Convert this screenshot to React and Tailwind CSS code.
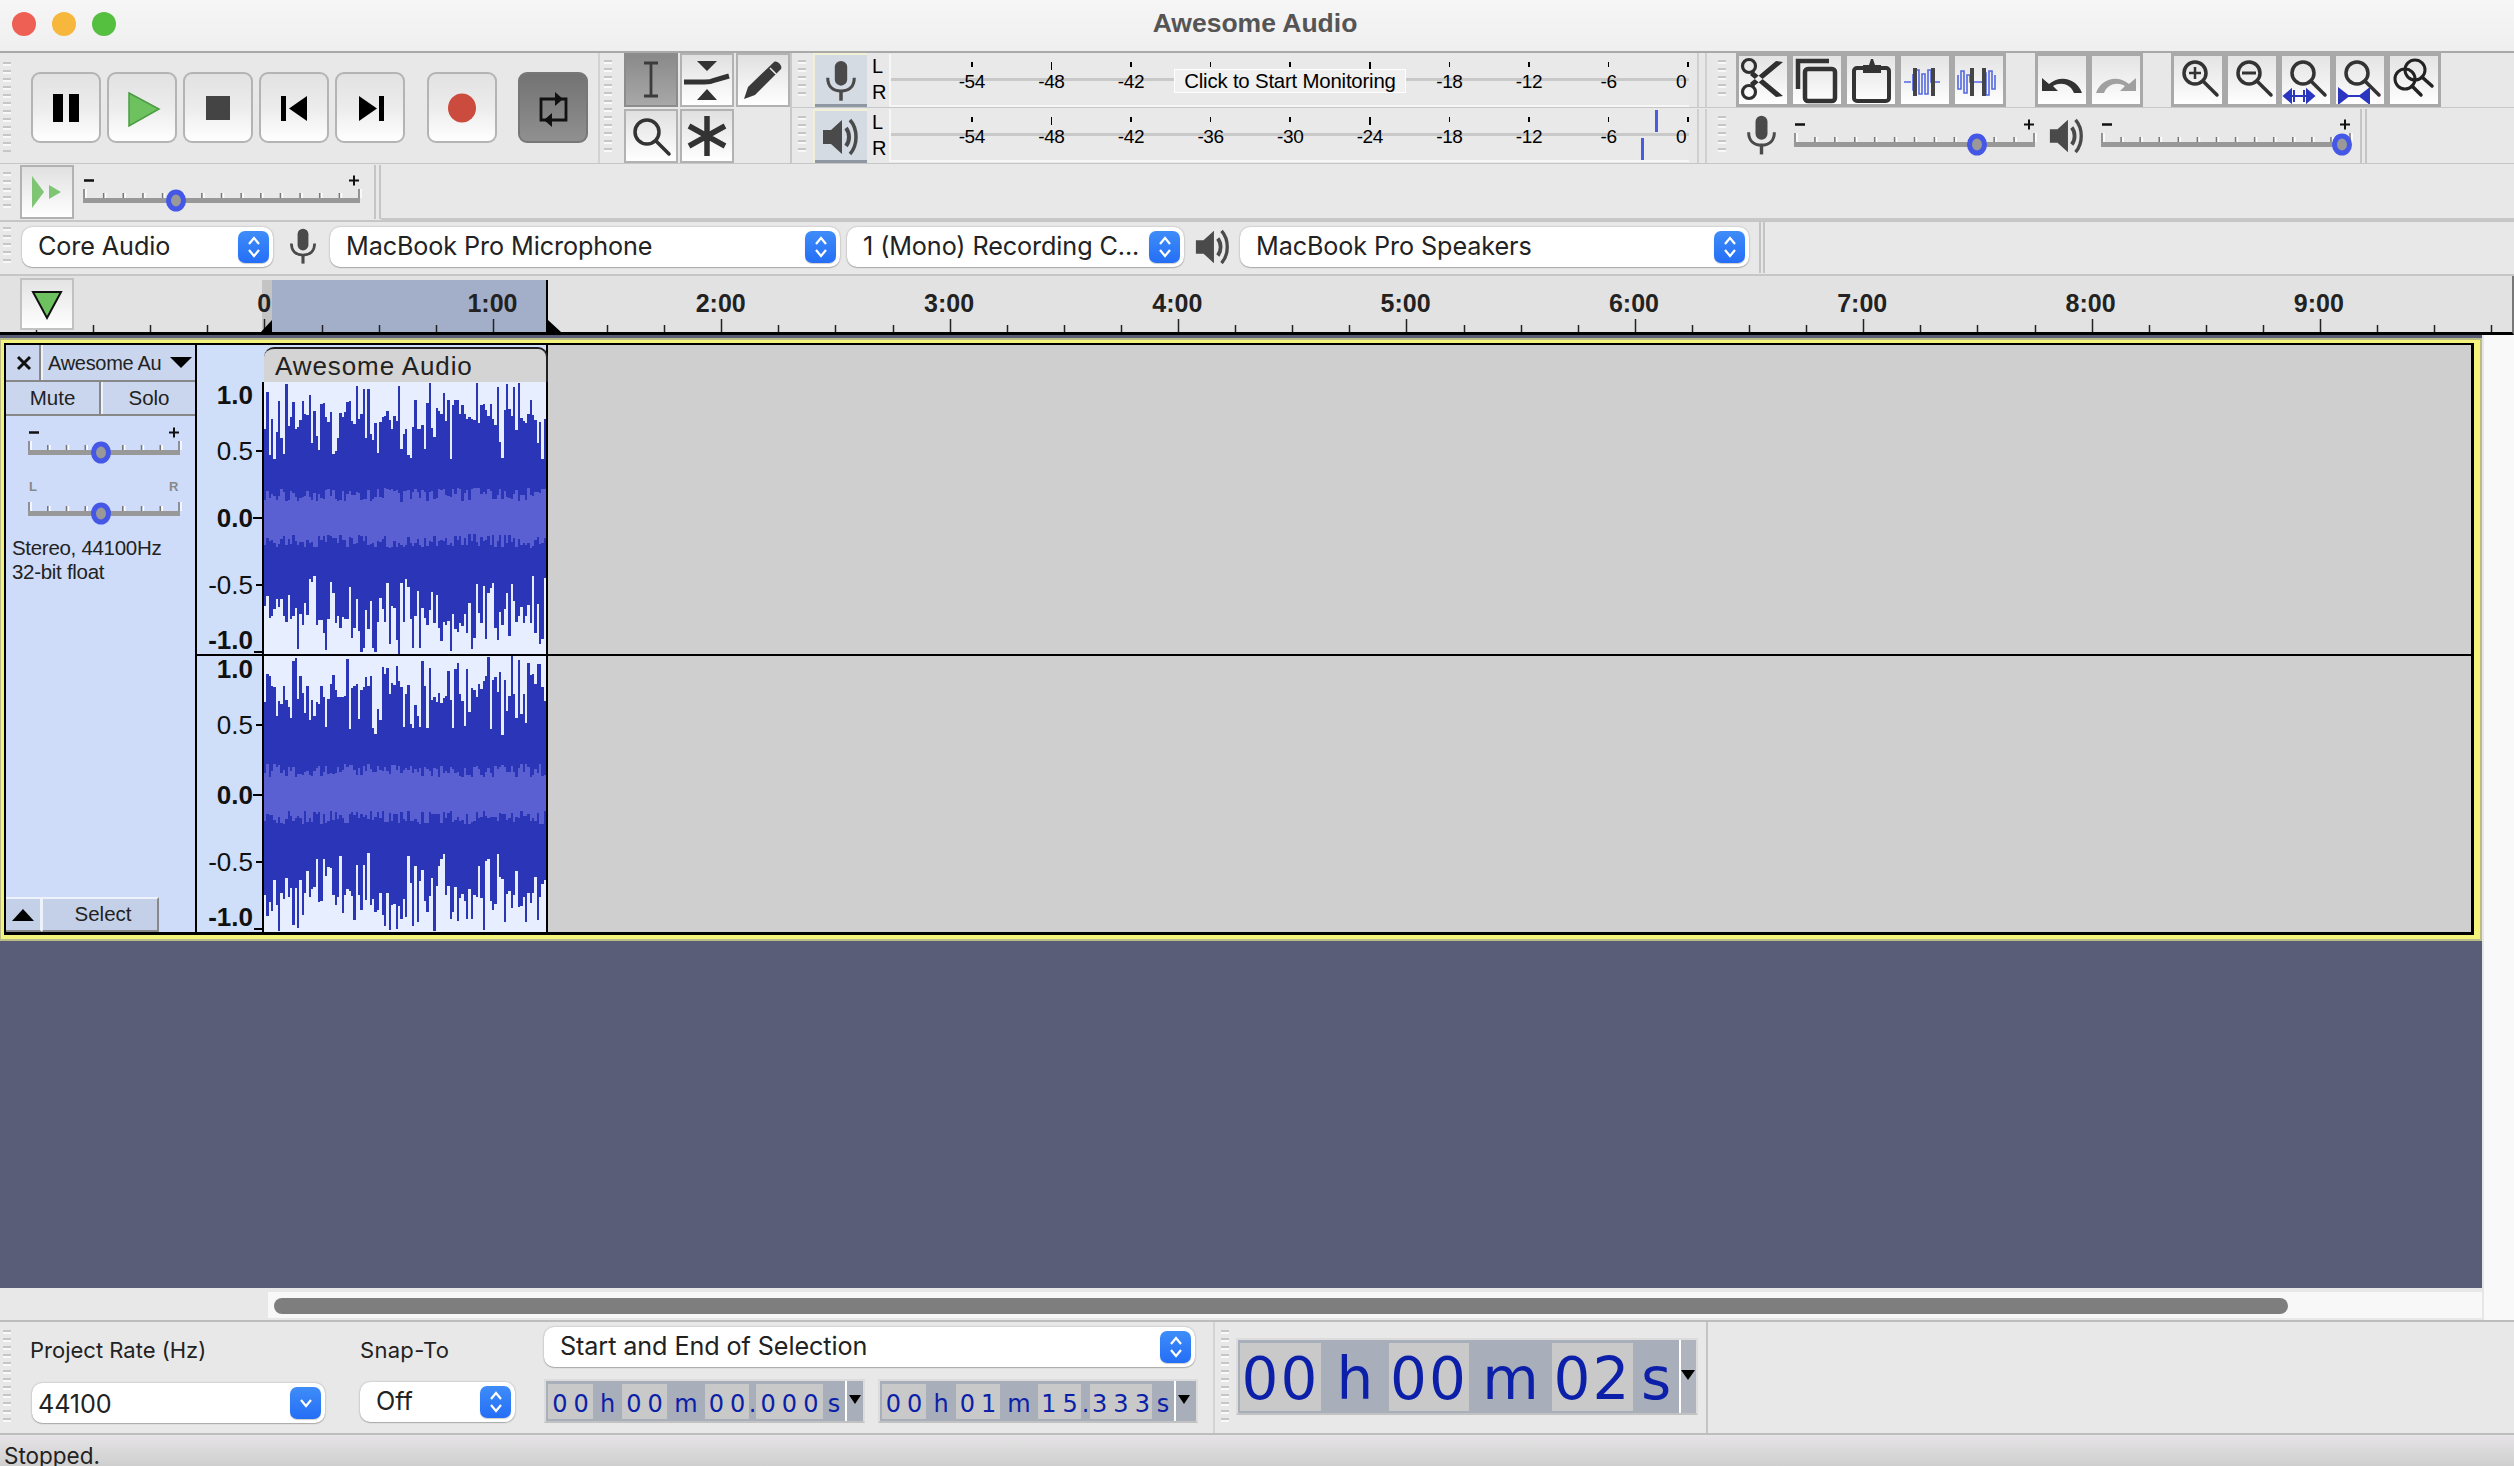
const SANS = 'font-["Liberation_Sans",Arial,sans-serif]';

// seeded random so the waveform stays the same on every render
const makeRandom = (seed) => () => {
    seed = (seed + 0x6d2b79f5) | 0;
    let t = Math.imul(seed ^ (seed >>> 15), 1 | seed);
    t = (t + Math.imul(t ^ (t >>> 7), 61 | t)) ^ t;
    return ((t ^ (t >>> 14)) >>> 0) / 4294967296;
};

const wavePaths = (seed, height) => {
    const rand = makeRandom(seed);
    const mid = Math.round(height / 2);
    const half = height / 2;
    const spike = (i) => {
        const swell = Math.sin(i / 9 + seed) * 0.04;
        const r = rand();
        if (r < 0.26) return 0.42 + rand() * 0.22;
        if (r < 0.5) return 0.84 + rand() * 0.16;
        return 0.66 + rand() * 0.16 + swell;
    };
    let dark = '';
    let light = '';
    for (let i = 0; i < 121; i++) {
        const x = Math.round(i * 2.35);
        const w = Math.round((i + 1) * 2.35) - x;
        const up = Math.round(spike(i) * half);
        const down = Math.round(spike(i) * half);
        dark += `M${x} ${mid - up}h${w}V${mid + down}h-${w}Z`;
        const rmsUp = Math.round((0.12 + rand() * 0.1) * half);
        const rmsDown = Math.round((0.12 + rand() * 0.1) * half);
        light += `M${x} ${mid - rmsUp}h${w}V${mid + rmsDown}h-${w}Z`;
    }
    return { dark, light };
};

const Grip = ({ className = '' }) => (
    <div className={`w-[8px] shrink-0 bg-[repeating-linear-gradient(to_bottom,#c6c6c6_0,#c6c6c6_2px,#f8f8f8_2px,#f8f8f8_4px,transparent_4px,transparent_8px)] ${className}`} />
);

const TransportButton = ({ children, active, className = '' }) => (
    <div className={`w-[70px] h-[71px] shrink-0 rounded-[9px] border-2 flex items-center justify-center ${active ? 'border-[#777] bg-gradient-to-b from-[#737373] to-[#909090]' : 'border-[#b4b4b4] bg-gradient-to-b from-[#e2e2e2] via-[#ececec] to-white'} ${className}`}>
        <svg width="66" height="67" viewBox="0 0 66 67">{children}</svg>
    </div>
);

const ToolButton = ({ children, active }) => (
    <div className={`w-[54px] h-[54px] shrink-0 border-2 flex items-center justify-center ${active ? 'border-[#8c8c8c] bg-gradient-to-b from-[#8a8a8a] to-[#a8a8a8]' : 'border-[#b2b2b2] bg-gradient-to-b from-[#e0e0e0] via-[#f0f0f0] to-white'}`}>
        <svg width="50" height="50" viewBox="2 2 50 50">{children}</svg>
    </div>
);

const EditButton = ({ children }) => (
    <div className="w-[54px] h-[54px] shrink-0 border-[3px] border-[#a9a9a9] bg-gradient-to-b from-[#e4e4e4] via-[#f0f0f0] to-white flex items-center justify-center">
        <svg width="48" height="48" viewBox="3 3 48 48">{children}</svg>
    </div>
);

const MicIcon = ({ size = 36, color = '#4a4a4a' }) => (
    <svg width={size} height={size * 1.3} viewBox="0 0 36 47" fill="none">
        <rect x="11" y="1" width="14" height="28" rx="7" fill={color} />
        <path d="M3 20c0 10 6 15 15 15s15-5 15-15" stroke={color} strokeWidth="3.5" />
        <path d="M18 35v11" stroke={color} strokeWidth="4" />
    </svg>
);

const SpeakerIcon = ({ size = 40, color = '#4a4a4a' }) => (
    <svg width={size} height={size} viewBox="0 0 40 40" fill="none">
        <path d="M2 13h8L21 3v34L10 27H2z" fill={color} />
        <path d="M25 11c4 5 4 13 0 18" stroke={color} strokeWidth="4" />
        <path d="M29 3c8 9 8 25 0 34" stroke={color} strokeWidth="3.5" />
    </svg>
);

const Slider = ({ width, count, thumb, pan }) => {
    const ticks = Array.from({ length: count }, (_, i) => 1 + (i * (width - 2)) / (count - 1));
    return (
        <svg width={width} height="56" viewBox={`0 0 ${width} 56`} className="shrink-0 overflow-visible">
            {ticks.map((x, i) => (
                <g key={i}>
                    <path d={`M${x} ${i === 0 || i === count - 1 ? 25 : 29}V34`} stroke="#777" strokeWidth="1.5" />
                    <path d={`M${x + 2} ${i === 0 || i === count - 1 ? 25 : 29}V34`} stroke="#fff" strokeWidth="1.5" />
                </g>
            ))}
            <rect x="0" y="34" width={width} height="5" fill="#989898" />
            {pan ? (
                <>
                    <text x="1" y="14" fontSize="13" fontWeight="700" fill="#888" fontFamily="Liberation Sans">L</text>
                    <text x={width - 11} y="14" fontSize="13" fontWeight="700" fill="#888" fontFamily="Liberation Sans">R</text>
                </>
            ) : (
                <>
                    <path d="M1 16.5h10" stroke="#111" strokeWidth="2.5" />
                    <path d={`M${width - 11} 16.5h10M${width - 6} 11.5v10`} stroke="#111" strokeWidth="2" />
                </>
            )}
            <ellipse cx={thumb} cy="36.5" rx="7.5" ry="8.5" fill="#999" stroke="#4557e6" strokeWidth="5" />
        </svg>
    );
};

const Stepper = ({ single }) => (
    <div className="w-[31px] h-[32px] shrink-0 rounded-[7px] bg-gradient-to-b from-[#3f8cf9] to-[#246ef6] flex items-center justify-center shadow-[0_1px_1px_rgba(0,0,0,0.2)]">
        <svg width="16" height="26" viewBox="0 0 16 26" fill="none" stroke="#fff" strokeWidth="2.2">
            {!single && <path d="M3 10l5-6 5 6" />}
            <path d={single ? 'M3 10l5 6 5-6' : 'M3 16l5 6 5-6'} />
        </svg>
    </div>
);

const Select = ({ className, text, single, textClass = '' }) => (
    <div className={`h-[40px] shrink-0 rounded-[10px] bg-white shadow-[0_0_2px_rgba(0,0,0,0.3),0_1px_1px_rgba(0,0,0,0.2)] flex items-center justify-between pl-[16px] pr-[4px] ${className}`}>
        <span className={`font-["Inter",sans-serif] text-[25.2px] text-[#222] leading-none whitespace-nowrap -tracking-[0.1px] ${textClass}`}>{text}</span>
        <Stepper single={single} />
    </div>
);

const VRule = ({ className = '' }) => <div className={`w-[2px] shrink-0 bg-[#c4c4c4] ${className}`} />;

const meterLabels = [
    { t: '-54' }, { t: '-48', long: true }, { t: '-42' }, { t: '-36' }, { t: '-30' },
    { t: '-24', long: true }, { t: '-18' }, { t: '-12' }, { t: '-6' }, { t: '0', end: true },
];

const Meter = ({ monitoring, marks }) => (
    <div className="relative w-[800px] h-[53px] shrink-0 overflow-hidden border-l-2 border-b-2 border-[#f6f6f6] bg-[#e9e9e9] pl-[41px] flex">
        <div className="absolute left-0 right-0 top-[24px] h-[3px] bg-[#c9c9c9]" />
        {meterLabels.map((m) => (
            <div key={m.t} className={`relative w-[79.6px] shrink-0 flex flex-col items-center pt-[8px] ${SANS}`}>
                <div className={`w-[1.5px] bg-black ${m.long ? 'h-[8px]' : 'h-[5px]'}`} />
                <div className={`text-[19px] tracking-[-0.4px] text-black leading-[22px] ${m.long ? 'mt-[1px]' : 'mt-[4px]'} ${m.end ? '-ml-[14px]' : ''}`}>
                    {monitoring && ['-36', '-30', '-24'].includes(m.t) ? '' : m.t}
                </div>
            </div>
        ))}
        {monitoring && (
            <div className={`absolute left-[283px] top-[15px] w-[232px] h-[24px] bg-[#f0f0f0] border border-white text-center text-[20.4px] leading-[22px] tracking-[-0.2px] text-black whitespace-nowrap ${SANS}`}>
                Click to Start Monitoring
            </div>
        )}
        {marks && (
            <>
                <div className="absolute left-[764px] top-[1px] w-[3px] h-[22px] bg-[#4b5be0]" />
                <div className="absolute left-[750px] top-[29px] w-[3px] h-[22px] bg-[#4b5be0]" />
            </>
        )}
    </div>
);

const MeterSide = ({ icon }) => (
    <div className="w-[54px] h-[54px] shrink-0 bg-[#d5dbe3] border-l-2 border-t-2 border-[#f2f0d4] shadow-[inset_0_-3px_0_#8f97a3] flex items-center justify-center">
        {icon}
    </div>
);

const LR = () => (
    <div className={`w-[22px] h-[54px] shrink-0 pl-[5px] text-[20px] leading-[26px] text-black ${SANS}`}>
        <div>L</div>
        <div>R</div>
    </div>
);

const MagBase = ({ cx = 24, cy = 20, r = 11 }) => (
    <g fill="none" stroke="#333" strokeWidth="3.5">
        <circle cx={cx} cy={cy} r={r} />
        <path d={`M${cx + r * 0.72} ${cy + r * 0.72}L${cx + r + 11} ${cy + r + 11}`} strokeLinecap="round" />
    </g>
);

const Scale = ({ rows }) => (
    <div className={`w-full h-full border-r-2 border-black flex flex-col items-end ${SANS}`}>
        {rows.map((r) => (
            <div key={r.t} className={`h-[26px] flex items-center justify-end text-[26px] leading-none text-[#111] ${r.bold ? 'font-bold' : ''} ${r.mt}`}>
                <span>{r.t}</span>
                <span className={`h-[2px] bg-black ${r.tick} ${r.end ? 'self-end' : ''}`} />
            </div>
        ))}
    </div>
);

const scaleTop = [
    { t: '1.0', bold: true, mt: '', tick: 'w-[6px] ml-[3px] opacity-0' },
    { t: '0.5', mt: 'mt-[30px]', tick: 'w-[6px] ml-[3px]' },
    { t: '0.0', bold: true, mt: 'mt-[41px]', tick: 'w-[9px]' },
    { t: '-0.5', mt: 'mt-[41px]', tick: 'w-[6px] ml-[3px]' },
    { t: '-1.0', bold: true, mt: 'mt-[29px]', tick: 'w-[8px] ml-[1px]', end: true },
];
const scaleBottom = [
    { t: '1.0', bold: true, mt: '', tick: 'w-[6px] ml-[3px] opacity-0' },
    { t: '0.5', mt: 'mt-[30px]', tick: 'w-[6px] ml-[3px]' },
    { t: '0.0', bold: true, mt: 'mt-[44px]', tick: 'w-[9px]' },
    { t: '-0.5', mt: 'mt-[41px]', tick: 'w-[6px] ml-[3px]' },
    { t: '-1.0', bold: true, mt: 'mt-[29px]', tick: 'w-[8px] ml-[1px]', end: true },
];

const Wave = ({ seed, height }) => {
    const { dark, light } = wavePaths(seed, height);
    return (
        <svg width="282" height={height} viewBox={`0 0 282 ${height}`} className="block bg-[#e6eeff]" shapeRendering="crispEdges">
            <path d={dark} fill="#2a35b8" />
            <path d={light} fill="#5a60d2" />
        </svg>
    );
};

const smallFirst = [
    { t: '00', box: true, w: 'w-[45px]' }, { t: 'h', w: 'w-[29px]' },
    { t: '00', box: true, w: 'w-[45px]' }, { t: 'm', w: 'w-[38px]' },
    { t: '00', box: true, w: 'w-[44px]' }, { t: '.', w: 'w-[7px]' },
    { t: '000', box: true, w: 'w-[67px]' }, { t: 's', w: 'w-[22px]' },
];
const smallSecond = [
    { t: '00', box: true, w: 'w-[44px]' }, { t: 'h', w: 'w-[30px]' },
    { t: '01', box: true, w: 'w-[44px]' }, { t: 'm', w: 'w-[38px]' },
    { t: '15', box: true, w: 'w-[43px]' }, { t: '.', w: 'w-[9px]' },
    { t: '333', box: true, w: 'w-[62px]' }, { t: 's', w: 'w-[22px]' },
];

const SmallTime = ({ segments, className }) => (
    <div className={`h-[44px] shrink-0 bg-[#a9aebb] border-2 border-[#dcdcdc] border-b-[#c2c2c2] flex items-center pl-[2px] font-["DejaVu_Sans",sans-serif] text-[24px] text-[#0b1fa8] leading-none ${className}`}>
        {segments.map((s, i) => (
            <div key={i} className={`${s.w} h-[35px] shrink-0 flex items-center justify-center pt-[6px] ${s.box ? 'bg-[#c9c9c9] tracking-[6px] pl-[6px]' : ''}`}>{s.t}</div>
        ))}
        <div className="flex-1 h-full border-l-2 border-white relative">
            <div className="absolute left-[2px] top-[14px] w-0 h-0 border-x-[6px] border-x-transparent border-t-[9px] border-t-black" />
        </div>
    </div>
);

const bigSegments = [
    { t: '00', box: true, w: 'w-[81px]' }, { t: 'h', w: 'w-[68px]' },
    { t: '00', box: true, w: 'w-[80px]' }, { t: 'm', w: 'w-[83px]' },
    { t: '02', box: true, w: 'w-[81px]' }, { t: 's', w: 'w-[46px]' },
];

const rulerLabels = ['0', '1:00', '2:00', '3:00', '4:00', '5:00', '6:00', '7:00', '8:00', '9:00'];

const rulerTicks = Array.from({ length: 44 }, (_, i) => ({ x: Math.round(36 + i * 57.1), major: i % 4 === 0 }));

const App = () => {
    return (
        <div className={`w-[2514px] h-[1466px] overflow-hidden flex flex-col bg-[#e8e8e8] ${SANS}`}>
            {/* Title bar */}
            <div className="h-[53px] shrink-0 relative flex items-center justify-center pr-[4px] pb-[4px] bg-gradient-to-b from-[#f6f6f6] to-[#efefef] border-b-2 border-[#a9a9a9]">
                <div className="absolute left-[12px] top-[12px] flex gap-[16px]">
                    <div className="w-[24px] h-[24px] rounded-full bg-[#ef6054]" />
                    <div className="w-[24px] h-[24px] rounded-full bg-[#f7b63c]" />
                    <div className="w-[24px] h-[24px] rounded-full bg-[#55bf40]" />
                </div>
                <span className="text-[26.5px] font-bold text-[#555] leading-none">Awesome Audio</span>
            </div>

            {/* Toolbars */}
            <div className="h-[111px] shrink-0 flex border-b border-[#c6c6c6]">
                <div className="w-[600px] shrink-0 flex items-center pb-[2px] border-r-2 border-[#d2d2d2]">
                    <Grip className="ml-[3px] h-[90px]" />
                    <div className="flex gap-[6px] ml-[20px]">
                        <TransportButton>
                            <rect x="20" y="20" width="10" height="28" fill="#000" />
                            <rect x="36" y="20" width="10" height="28" fill="#000" />
                        </TransportButton>
                        <TransportButton>
                            <path d="M20 19l30 16-30 17z" fill="#6dc15f" stroke="#4c9c43" strokeWidth="1.5" />
                        </TransportButton>
                        <TransportButton>
                            <rect x="21" y="22" width="24" height="24" fill="#444" />
                        </TransportButton>
                        <TransportButton>
                            <rect x="20" y="22" width="5" height="25" fill="#000" />
                            <path d="M46 22v25L28 34.5z" fill="#000" />
                        </TransportButton>
                        <TransportButton>
                            <path d="M22 22v25l18-12.5z" fill="#000" />
                            <rect x="42" y="22" width="5" height="25" fill="#000" />
                        </TransportButton>
                        <TransportButton className="ml-[16px]">
                            <ellipse cx="33" cy="34" rx="14" ry="14.5" fill="#cc4b3f" />
                        </TransportButton>
                        <TransportButton active className="ml-[15px]">
                            <path d="M36 25H21v21h7M31 46h15V25h-6" fill="none" stroke="#111" strokeWidth="2.8" />
                            <path d="M35 18l8 7-8 7zM32 39l-8 7 8 7z" fill="#111" />
                        </TransportButton>
                    </div>
                </div>
                <div className="w-[190px] shrink-0 flex items-center">
                    <Grip className="ml-[4px] h-[96px]" />
                    <div className="ml-[12px] grid grid-cols-[54px_54px_54px] grid-rows-[54px_54px] gap-x-[2px] gap-y-[2px]">
                        <ToolButton active>
                            <path d="M20 10h14M20 43h14M27 10v33" stroke="#3c3c3c" strokeWidth="2.8" />
                        </ToolButton>
                        <ToolButton>
                            <path d="M17 8h20l-10 10zM17 47h20L27 36z" fill="#333" />
                            <path d="M4 29h14c9 0 11 1 17-2l14-4" fill="none" stroke="#333" strokeWidth="5" />
                        </ToolButton>
                        <ToolButton>
                            <path d="M8 46l4-12 26-25c3-2 9 4 7 7L19 42z" fill="#3a3a3a" />
                            <path d="M34 15l6 6" stroke="#eee" strokeWidth="1.5" />
                        </ToolButton>
                        <ToolButton>
                            <circle cx="23" cy="23" r="12" fill="none" stroke="#333" strokeWidth="3.5" />
                            <path d="M32 32l13 13" stroke="#333" strokeWidth="3.5" strokeLinecap="round" />
                        </ToolButton>
                        <ToolButton>
                            <path d="M27 7v40M9 17l36 20M45 17L9 37" stroke="#333" strokeWidth="5.5" />
                        </ToolButton>
                    </div>
                </div>
                <div className="flex-1 flex flex-col">
                    {/* Meters and edit tools */}
                    <div className="h-[55px] flex items-center border-b border-[#c8c8c8] border-l-2">
                        <Grip className="ml-[6px] h-[40px]" />
                        <div className="ml-[7px]"><MeterSide icon={<MicIcon size={32} />} /></div>
                        <LR />
                        <Meter monitoring />
                        <VRule className="ml-[8px] h-[54px] opacity-70" />
                        <VRule className="ml-[6px] h-[54px] opacity-70" />
                        <Grip className="ml-[11px] h-[40px]" />
                        <div className="ml-[10px] flex">
                            <EditButton>
                                <g fill="none" stroke="#2f2f2f" strokeWidth="3.2">
                                    <circle cx="13" cy="13" r="6.5" />
                                    <circle cx="13" cy="39" r="6.5" />
                                </g>
                                <path d="M17 18l30 25-7 1-26-22zM17 34L47 9l-7-1-26 22z" fill="#2f2f2f" />
                            </EditButton>
                            <EditButton>
                                <path d="M8 36V8h31" fill="none" stroke="#333" strokeWidth="4.5" />
                                <rect x="15" y="16" width="30" height="32" rx="3" fill="none" stroke="#333" strokeWidth="4.5" />
                            </EditButton>
                            <EditButton>
                                <rect x="10" y="15" width="35" height="33" rx="3" fill="none" stroke="#333" strokeWidth="4" />
                                <path d="M19 12h6l2-6h2l2 6h6v8H19z" fill="#333" />
                            </EditButton>
                            <EditButton>
                                <path d="M6 29h7M15 21v16h3V17h3v24h3V21h3v20h3V17h3v12h9" fill="none" stroke="#5468e0" strokeWidth="1.6" />
                                <rect x="15" y="15" width="4" height="28" fill="#444" />
                                <rect x="33" y="15" width="4" height="28" fill="#444" />
                            </EditButton>
                            <EditButton>
                                <path d="M6 22v14h3V18h3v22h3V22h3v7h13v-9h3v22h3V18h3v18h3V22" fill="none" stroke="#5468e0" strokeWidth="1.6" />
                                <rect x="18" y="15" width="4" height="28" fill="#444" />
                                <rect x="30" y="15" width="4" height="28" fill="#444" />
                            </EditButton>
                            <div className="w-[29px]" />
                            <EditButton>
                                <path d="M7 25v13h16l-5-5c7-4 17-3 21 7h8c-5-14-21-19-33-9z" fill="#333" />
                            </EditButton>
                            <EditButton>
                                <path d="M47 25v13H31l5-5c-7-4-17-3-21 7H7c5-14 21-19 33-9z" fill="#a0a0a0" />
                            </EditButton>
                            <div className="w-[28px]" />
                            <EditButton>
                                <MagBase />
                                <path d="M18 20h12M24 14v12" stroke="#333" strokeWidth="2.5" />
                            </EditButton>
                            <EditButton>
                                <MagBase />
                                <path d="M17 20h14" stroke="#333" strokeWidth="3" />
                            </EditButton>
                            <EditButton>
                                <MagBase />
                                <path d="M5 43h30M12 37l-7 6 7 6zM28 37l7 6-7 6zM15 37v12M25 37v12" fill="#2a35c0" stroke="#2a35c0" strokeWidth="2" />
                            </EditButton>
                            <EditButton>
                                <MagBase />
                                <path d="M8 43h28M6 36v14l9-7zM36 36v14l-9-7z" fill="#2a35c0" stroke="#2a35c0" strokeWidth="2" />
                            </EditButton>
                            <EditButton>
                                <circle cx="28" cy="17" r="10" fill="none" stroke="#222" strokeWidth="3" />
                                <circle cx="18" cy="26" r="10" fill="none" stroke="#222" strokeWidth="3" />
                                <path d="M35 24l10 9M25 33l9 9" stroke="#222" strokeWidth="3.5" strokeLinecap="round" />
                            </EditButton>
                        </div>
                    </div>
                    <div className="h-[55px] flex items-center border-l-2 border-[#c8c8c8]">
                        <Grip className="ml-[6px] h-[40px]" />
                        <div className="ml-[7px]"><MeterSide icon={<SpeakerIcon size={40} />} /></div>
                        <LR />
                        <Meter marks />
                        <VRule className="ml-[8px] h-[54px] opacity-70" />
                        <VRule className="ml-[6px] h-[54px] opacity-70" />
                        <Grip className="ml-[11px] h-[40px]" />
                        <div className="ml-[20px]"><MicIcon size={31} /></div>
                        <div className="ml-[17px]"><Slider width={241} count={13} thumb={183} /></div>
                        <div className="ml-[13px]"><SpeakerIcon size={38} /></div>
                        <div className="ml-[15px]"><Slider width={250} count={14} thumb={241} /></div>
                        <VRule className="ml-[9px] h-[54px]" />
                        <VRule className="ml-[3px] h-[54px]" />
                    </div>
                </div>
            </div>

            {/* Play-at-speed */}
            <div className="h-[56px] shrink-0 flex items-center">
                <Grip className="ml-[3px] h-[40px]" />
                <div className="ml-[9px] w-[54px] h-[54px] border-2 border-[#b2b2b2] bg-gradient-to-b from-[#e0e0e0] via-[#f0f0f0] to-white flex items-center justify-center">
                    <svg width="44" height="44" viewBox="0 0 44 44">
                        <path d="M7 6l12 16L7 38z" fill="#7fc574" />
                        <path d="M24 15l12 7-12 7z" fill="#7fc574" />
                    </svg>
                </div>
                <div className="ml-[9px]"><Slider width={277} count={15} thumb={93} /></div>
                <VRule className="ml-[14px] h-[54px]" />
                <VRule className="ml-[3px] h-[54px]" />
                <div className="flex-1 h-full border-b-2 border-[#c8c8c8]" />
            </div>

            {/* Device selectors */}
            <div className="h-[56px] shrink-0 flex items-center pb-[3px] border-t-2 border-b-2 border-[#c6c6c6]">
                <Grip className="ml-[3px] h-[40px]" />
                <Select className="ml-[11px] w-[251px]" text="Core Audio" />
                <div className="ml-[16px] w-[28px]"><MicIcon size={28} /></div>
                <Select className="ml-[13px] w-[510px]" text="MacBook Pro Microphone" />
                <Select className="ml-[7px] w-[337px]" text="1 (Mono) Recording C..." />
                <div className="ml-[10px] w-[40px]"><SpeakerIcon size={38} /></div>
                <Select className="ml-[6px] w-[509px]" text="MacBook Pro Speakers" />
                <VRule className="ml-[10px] h-[52px]" />
                <VRule className="ml-[2px] h-[52px]" />
            </div>

            {/* Timeline ruler */}
            <div className="h-[59px] shrink-0 relative bg-[#e2e2e2] border-b-[3px] border-black border-r-2 border-r-[#777]">
                <div className="absolute left-[262px] top-[4px] bottom-0 w-[10px] bg-[#c4c4c4]" />
                <div className="absolute left-[272px] top-[4px] bottom-0 w-[276px] bg-[#a3aec9] border-r-2 border-black" />
                <svg width="2514" height="56" viewBox="0 0 2514 56" className="absolute left-0 top-0">
                    {rulerTicks.map((t) => (
                        <path key={t.x} d={`M${t.x + 0.5} ${t.major ? 43 : 49}V56`} stroke="#222" strokeWidth="1.5" />
                    ))}
                    <path d="M272 44v12h-11zM548 44v12h13z" fill="#000" />
                </svg>
                <div className="absolute left-[20px] top-[2px] w-[54px] h-[52px] border-2 border-[#c2c2c2] bg-gradient-to-b from-[#e4e4e4] to-white flex items-center justify-center">
                    <svg width="34" height="34" viewBox="0 0 34 34">
                        <path d="M3 5h28L17 31z" fill="#6dc15f" stroke="#111" strokeWidth="2" />
                    </svg>
                </div>
                <div className="relative ml-[150px] h-full flex items-center pb-[2px]">
                    {rulerLabels.map((l) => (
                        <div key={l} className="w-[228.3px] shrink-0 text-center text-[25px] font-bold text-[#222] leading-none">{l}</div>
                    ))}
                </div>
            </div>

            {/* Track area */}
            <div className="h-[985px] shrink-0 flex">
                <div className="w-[2482px] shrink-0 flex flex-col">
                    <div className="flex-1 bg-[#595d78] pt-[3px]">
                        <div className="border-2 border-[#bcbc86] border-l">
                            <div className="border-[4px] border-t-[3px] border-l-[3px] border-r-[6px] border-[#f4f47c]">
                                <div className="h-[592px] border-t-2 border-l-2 border-b-[3px] border-r-[3px] border-black flex bg-[#cfcfcf]">
                                    {/* Track control panel */}
                                    <div className="w-[191px] shrink-0 bg-[#cedcf9] border-r-2 border-black flex flex-col relative">
                                        <div className="h-[37px] flex border-b-2 border-[#888]">
                                            <div className="w-[35px] border-r-2 border-[#888] bg-[#c9d6ee] flex items-center justify-center pl-[3px]">
                                                <svg width="16" height="16" viewBox="0 0 16 16"><path d="M2 2l12 12M14 2L2 14" stroke="#111" strokeWidth="3" /></svg>
                                            </div>
                                            <div className="flex-1 bg-[#c9d6ee] border-l-2 border-[#eef2fb] flex items-center justify-between pl-[5px] pr-[3px]">
                                                <span className="text-[20px] leading-none text-[#222] tracking-[-0.3px] whitespace-nowrap">Awesome Au</span>
                                                <div className="w-0 h-0 border-x-[11px] border-x-transparent border-t-[11px] border-t-black" />
                                            </div>
                                        </div>
                                        <div className="h-[34px] flex border-b-2 border-[#888]">
                                            <div className="w-[95px] border-r-2 border-[#888] bg-[#c9d6ee] flex items-center justify-center text-[20.5px] leading-none text-[#222]">Mute</div>
                                            <div className="flex-1 border-l-2 border-[#eef2fb] bg-[#c9d6ee] flex items-center justify-center text-[20.5px] leading-none text-[#222]">Solo</div>
                                        </div>
                                        <div className="ml-[22px]"><Slider width={152} count={9} thumb={73} /></div>
                                        <div className="ml-[22px] mt-[5px]"><Slider width={152} count={9} thumb={73} pan /></div>
                                        <div className="ml-[6px] mt-[3px] text-[20.5px] leading-[24px] text-[#222] tracking-[-0.3px]">
                                            <div>Stereo, 44100Hz</div>
                                            <div>32-bit float</div>
                                        </div>
                                        <div className="absolute left-0 bottom-0 flex h-[35px]">
                                            <div className="w-[36px] bg-[#c3d0e8] border-t-2 border-r-2 border-[#eef2fb] border-b-2 border-b-[#888] flex items-center justify-center">
                                                <div className="w-0 h-0 border-x-[11px] border-x-transparent border-b-[12px] border-b-black" />
                                            </div>
                                            <div className="w-[117px] pl-[6px] bg-[#c3d0e8] border-t-2 border-l border-r-2 border-b-2 border-[#eef2fb] border-b-[#888] border-r-[#888] flex items-center justify-center text-[20.5px] leading-none text-[#222]">Select</div>
                                        </div>
                                    </div>
                                    {/* Waveform lanes */}
                                    <div className="flex-1 flex flex-col">
                                        <div className="h-[311px] flex border-b-2 border-black">
                                            <div className="w-[67px] h-full shrink-0 bg-[#cfdffa] pt-[37px]">
                                                <Scale rows={scaleTop} />
                                            </div>
                                            <div className="w-[284px] shrink-0 bg-[#cfdffa] border-r-2 border-black flex flex-col">
                                                <div className="h-[35px] mt-[2px] shrink-0 rounded-t-[10px] border-t-2 border-r-2 border-[#222] bg-[#d4d4d4] -mr-[2px] pl-[11px] flex items-center">
                                                    <span className="text-[26px] leading-none text-[#222] tracking-[0.9px] whitespace-nowrap">Awesome Audio</span>
                                                </div>
                                                <Wave seed={17} height={272} />
                                            </div>
                                        </div>
                                        <div className="flex-1 flex min-h-0">
                                            <div className="w-[67px] h-full shrink-0 bg-[#cfdffa]">
                                                <Scale rows={scaleBottom} />
                                            </div>
                                            <div className="w-[284px] shrink-0 border-r-2 border-black">
                                                <Wave seed={91} height={276} />
                                            </div>
                                        </div>
                                    </div>
                                </div>
                            </div>
                        </div>
                    </div>
                    {/* Horizontal scrollbar */}
                    <div className="h-[32px] shrink-0 pt-[4px] pl-[268px]">
                        <div className="h-[26px] bg-[#f8f8f8] pl-[6px] pt-[6px]">
                            <div className="w-[2014px] h-[16px] rounded-full bg-[#7e7e7e]" />
                        </div>
                    </div>
                </div>
                <div className="flex-1 bg-[#f9f9f9] border-l-2 border-[#e6e6e6]" />
            </div>

            {/* Selection toolbar */}
            <div className="h-[115px] shrink-0 flex border-t-2 border-b-2 border-[#bdbdbd]">
                <Grip className="ml-[3px] mt-[8px] h-[96px]" />
                <div className="ml-[19px] w-[297px] shrink-0 flex flex-col">
                    <div className="h-[61px] pt-[16px] text-[22px] font-['Inter',sans-serif] leading-[24px] text-[#222] whitespace-nowrap">Project Rate (Hz)</div>
                    <Select className="ml-[2px] w-[293px] !pl-[6px]" text="44100" single textClass="pt-[4px]" />
                </div>
                <div className="ml-[33px] w-[155px] shrink-0 flex flex-col">
                    <div className="h-[60px] pt-[16px] text-[22px] tracking-[0.3px] font-['Inter',sans-serif] leading-[24px] text-[#222]">Snap-To</div>
                    <Select className="w-[155px]" text="Off" />
                </div>
                <div className="ml-[29px] w-[655px] shrink-0 flex flex-col pt-[5px]">
                    <Select className="w-[651px]" text="Start and End of Selection" />
                    <div className="mt-[12px] flex gap-[13px]">
                        <SmallTime segments={smallFirst} className="w-[321px]" />
                        <SmallTime segments={smallSecond} className="w-[320px]" />
                    </div>
                </div>
                <VRule className="ml-[14px] h-full opacity-60" />
                <Grip className="ml-[6px] mt-[8px] h-[96px]" />
                <div className="ml-[7px] mt-[16px] w-[462px] h-[77px] shrink-0 bg-[#a9aebb] border-2 border-[#dcdcdc] border-b-[#c2c2c2] flex items-center pl-[2px] font-['DejaVu_Sans',sans-serif] text-[58px] text-[#0b1fa8] leading-none">
                    {bigSegments.map((s, i) => (
                        <div key={i} className={`${s.w} h-[68px] shrink-0 flex items-center justify-center pt-[5px] ${s.box ? 'bg-[#c9c9c9] tracking-[2px]' : ''}`}>{s.t}</div>
                    ))}
                    <div className="flex-1 h-full border-l-2 border-white relative bg-[#b0b4bf]">
                        <div className="absolute left-0 top-[30px] w-0 h-0 border-x-[7px] border-x-transparent border-t-[10px] border-t-black" />
                    </div>
                </div>
                <VRule className="ml-[8px] h-full" />
            </div>

            {/* Status bar */}
            <div className="flex-1 overflow-hidden bg-gradient-to-b from-[#e6e4e6] to-[#cfcfcf] pl-[4px] pt-[9px] text-[22.5px] leading-[24px] font-['Inter',sans-serif] text-[#222]">
                Stopped.
            </div>
        </div>
    );
};

export default App;
